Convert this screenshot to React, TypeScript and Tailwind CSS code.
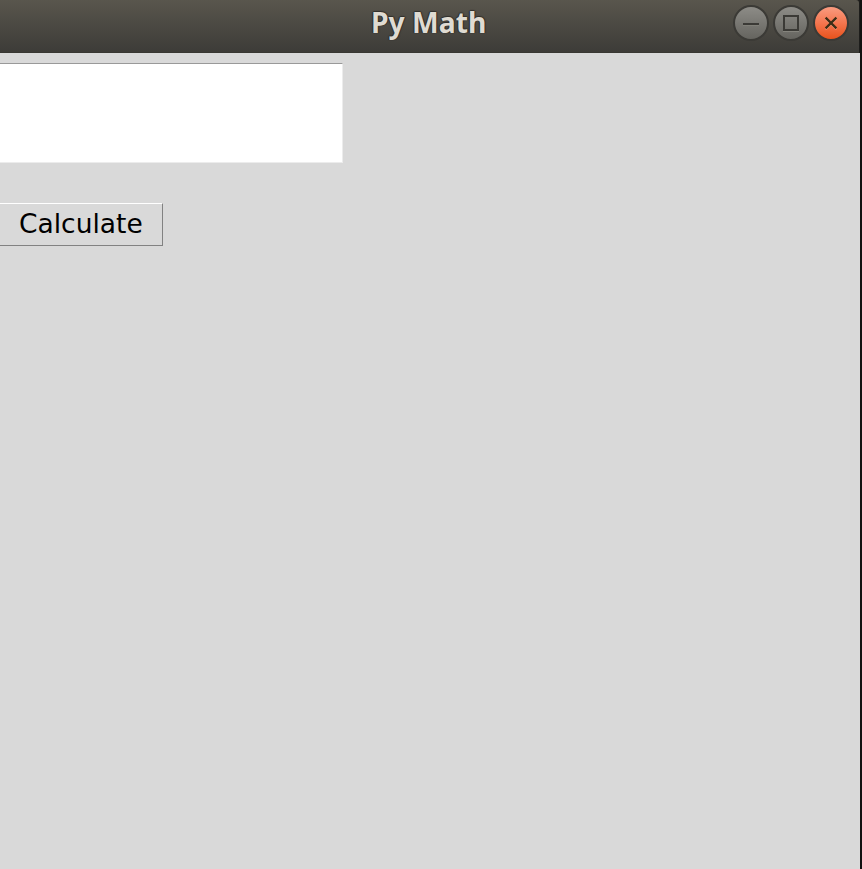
import React from "react";

function WindowControls() {
  return (
    <svg width="120" height="42" viewBox="0 0 120 42" className="block">
      <defs>
        <linearGradient id="grayFill" x1="0" y1="0" x2="0" y2="1">
          <stop offset="0" stopColor="#8e8d88" />
          <stop offset="1" stopColor="#64635e" />
        </linearGradient>
        <linearGradient id="closeFill" x1="0" y1="0" x2="0" y2="1">
          <stop offset="0" stopColor="#fa9e83" />
          <stop offset="0.5" stopColor="#f5764f" />
          <stop offset="1" stopColor="#e65019" />
        </linearGradient>
      </defs>
      <circle cx="20" cy="23" r="17" fill="url(#grayFill)" stroke="#3b3a36" strokeWidth="2" />
      <path d="M12 25.5H28" stroke="#807f78" strokeWidth="1" />
      <path d="M12 24H28" stroke="#3b3a36" strokeWidth="2" />
      <circle cx="60" cy="23" r="17" fill="url(#grayFill)" stroke="#3b3a36" strokeWidth="2" />
      <path d="M52 31.5H68" stroke="#85847d" strokeWidth="1" />
      <rect x="53" y="16" width="14" height="14" fill="none" stroke="#3b3a36" strokeWidth="2" />
      <circle cx="100" cy="23" r="17" fill="url(#closeFill)" stroke="#3b3a36" strokeWidth="2" />
      <path d="M94.6 18.8L105.4 29.4M105.4 18.8L94.6 29.4" stroke="#fa9877" strokeWidth="2" />
      <path d="M94.6 17.6L105.4 28.4M105.4 17.6L94.6 28.4" stroke="#3c2d16" strokeWidth="2.2" />
    </svg>
  );
}

export default function App() {
  return (
    <div className="flex h-[869px] w-[862px] overflow-hidden bg-[#111111]">
      <div className="flex w-[860px] flex-col bg-[#d9d9d9]">
        <div className="bg-[#1d1d1b] pr-px">
          <header className="grid h-[53px] grid-cols-[371px_1fr_128px] items-start rounded-tr-[3px] border-b border-b-[#393833] bg-linear-to-b from-[#59564d] to-[#3d3c38]">
            <span />
            <h1 className="pt-[3px] font-['Noto_Sans',sans-serif] text-[28px] leading-[38px] font-bold whitespace-nowrap text-[#dfdbd2] [text-shadow:0_-1px_1px_#302f2b,1px_0_1px_#302f2b,-1px_0_1px_#302f2b]">
              <span className="inline-block origin-left scale-x-[1.01]">Py Math</span>
            </h1>
            <WindowControls />
          </header>
        </div>
        <main className="flex flex-col items-start pt-[10px]">
          <input
            aria-label="Expression"
            className="h-[100px] w-[343px] rounded-none border-t border-r border-b border-t-[#999999] border-r-[#ececec] border-b-[#ececec] bg-white outline-none"
          />
          <button className="mt-10 h-[43px] w-[163px] border-t border-r border-b border-t-white border-r-[#828282] border-b-[#828282] pb-[2px] pl-[19px] text-left font-['DejaVu_Sans',sans-serif] text-[26.5px] leading-[39px] text-black">
            Calculate
          </button>
        </main>
      </div>
    </div>
  );
}
